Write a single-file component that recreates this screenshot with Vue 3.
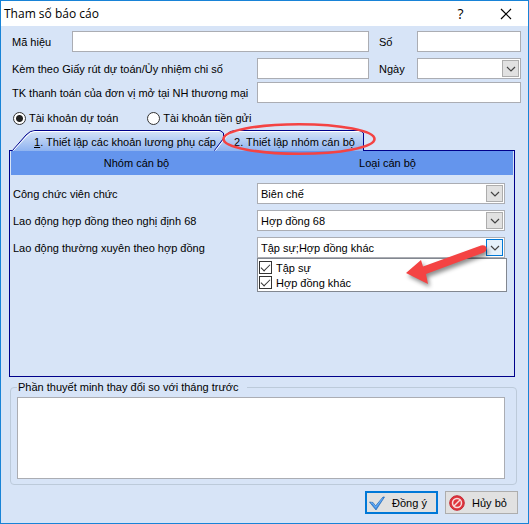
<script setup>
import { ref, reactive, computed } from 'vue'

const form = reactive({
  code: '',
  number: '',
  voucher: '',
  date: '',
  account: '',
  accountType: 'budget',
  note: ''
})

const tabs = [
  { id: 1, label: 'Thiết lập các khoản lương phụ cấp' },
  { id: 2, label: 'Thiết lập nhóm cán bộ' }
]
const activeTab = ref(2)

const groups = reactive([
  { id: 'g1', label: 'Công chức viên chức', value: 'Biên chế' },
  { id: 'g2', label: 'Lao động hợp đồng theo nghị định 68', value: 'Hợp đồng 68' }
])
const kinds = ['Biên chế', 'Hợp đồng 68', 'Tập sự', 'Hợp đồng khác']

const options = ['Tập sự', 'Hợp đồng khác']
const picked = ref(['Tập sự', 'Hợp đồng khác'])
const listOpen = ref(true)
const pickedText = computed(() => options.filter(o => picked.value.includes(o)).join(';'))

function toggleList () {
  listOpen.value = !listOpen.value
}
</script>

<template>
  <form class="window" @submit.prevent>
    <header class="titlebar">
      <h1 class="title">Tham số báo cáo</h1>
      <button class="win-btn" type="button" aria-label="Trợ giúp">?</button>
      <button class="win-btn" type="button" aria-label="Đóng">
        <svg width="12" height="12" viewBox="0 0 12 12"><path d="M1 1L11 11M11 1L1 11" fill="none" stroke="#000" stroke-width="1.2" /></svg>
      </button>
    </header>

    <!-- Thông tin chung -->
    <section class="fields">
      <div class="row">
        <label class="short" for="code">Mã hiệu</label>
        <input id="code" v-model="form.code" class="box grow" type="text" />
        <label class="side" for="number">Số</label>
        <input id="number" v-model="form.number" class="box fixed" type="text" />
      </div>
      <div class="row">
        <label class="long" for="voucher">Kèm theo Giấy rút dự toán/Ủy nhiệm chi số</label>
        <input id="voucher" v-model="form.voucher" class="box grow" type="text" />
        <label class="side" for="date">Ngày</label>
        <div class="combo fixed">
          <select id="date" v-model="form.date" class="box"><option value=""></option></select>
          <span class="arrow"><svg width="10" height="6" viewBox="0 0 10 6"><path d="M1 1L5 5L9 1" /></svg></span>
        </div>
      </div>
      <div class="row tight">
        <label class="long" for="account">TK thanh toán của đơn vị mở tại NH thương mại</label>
        <input id="account" v-model="form.account" class="box grow" type="text" />
      </div>
      <div class="radios">
        <label><input v-model="form.accountType" type="radio" name="type" value="budget" />Tài khoản dự toán</label>
        <label><input v-model="form.accountType" type="radio" name="type" value="deposit" />Tài khoản tiền gửi</label>
      </div>
    </section>

    <nav class="tabs">
      <!-- nền và đường viền vát của các tab -->
      <svg class="tab-shapes" width="354" height="21" viewBox="0 0 354 21">
        <defs>
          <linearGradient id="tabFill" x1="0" y1="0" x2="0" y2="1">
            <stop offset="0" stop-color="#d7e4f7" />
            <stop offset="1" stop-color="#8fb3f0" />
          </linearGradient>
        </defs>
        <path d="M1 21L15 5Q19 .5 24 .5H209L212.500 3V21Z" fill="url(#tabFill)" />
        <path d="M1.500 20.500L15 5Q19 .5 24 .5H209L212.500 3V10" fill="none" stroke="#00008b" />
        <path d="M2.500 20.500L16 6Q20 1.500 24 1.500H208" fill="none" stroke="#fff" />
        <path d="M203 21L215 5Q219 .5 224 .5H349L352.500 3V21Z" fill="url(#tabFill)" />
        <path d="M203.500 20.500L215 5Q219 .5 224 .5H349L352.500 3V21" fill="none" stroke="#00008b" />
        <path d="M204.500 20.500L216 6Q220 1.500 224 1.500H348" fill="none" stroke="#fff" />
      </svg>
      <button v-for="t in tabs" :key="t.id" :class="['tab', 'tab' + t.id]" type="button" @click="activeTab = t.id">
        <u>{{ t.id }}</u>. {{ t.label }}
      </button>
      <!-- khoanh đỏ tab nhóm cán bộ -->
      <svg class="ring" width="154" height="34" viewBox="0 0 154 34">
        <ellipse cx="77" cy="17" rx="75.500" ry="14.800" fill="none" stroke="#f44343" stroke-width="2.600" />
      </svg>
    </nav>

    <section class="panel">
      <div class="panel-head"><span>Nhóm cán bộ</span><span>Loại cán bộ</span></div>
      <div class="panel-body">
        <div v-for="g in groups" :key="g.id" class="group">
          <label :for="g.id">{{ g.label }}</label>
          <div class="combo">
            <select :id="g.id" v-model="g.value" class="box">
              <option v-for="k in kinds" :key="k">{{ k }}</option>
            </select>
            <span class="arrow"><svg width="10" height="6" viewBox="0 0 10 6"><path d="M1 1L5 5L9 1" /></svg></span>
          </div>
        </div>
        <div class="group">
          <label for="g3">Lao động thường xuyên theo hợp đồng</label>
          <div class="combo">
            <select id="g3" class="box" @mousedown.prevent="toggleList"><option>{{ pickedText }}</option></select>
            <span class="arrow active"><svg width="10" height="6" viewBox="0 0 10 6"><path d="M1 1L5 5L9 1" /></svg></span>
            <div v-if="listOpen" class="list">
              <label v-for="o in options" :key="o"><input v-model="picked" type="checkbox" :value="o" />{{ o }}</label>
            </div>
            <!-- mũi tên chỉ vào danh sách -->
            <svg class="pointer" width="84" height="48" viewBox="0 0 84 48">
              <path d="M0 32L15 19L17 25.500L75 4.500Q79 3.500 80.500 6.500Q81 10 78 11.500L20 33L22 43Z" fill="#f44343" />
            </svg>
          </div>
        </div>
      </div>
    </section>

    <fieldset class="note">
      <legend><label for="note">Phần thuyết minh thay đổi so với tháng trước</label></legend>
      <textarea id="note" v-model="form.note"></textarea>
    </fieldset>

    <footer class="actions">
      <button class="btn primary" type="submit">
        <svg width="16" height="16" viewBox="0 0 16 16">
          <path d="M.5 7L4 7.500L6.500 11L14 2L15.500 2L7 15Z" fill="#3d8ee6" stroke="#2468b5" stroke-width=".7" />
          <path d="M2 7.800L3.700 8.300L6.700 12.300L13.500 3.500" fill="none" stroke="#7dbbfa" stroke-width=".8" />
        </svg>
        <span>Đồng ý</span>
      </button>
      <button class="btn" type="button">
        <svg width="16" height="16" viewBox="0 0 16 16">
          <circle cx="8" cy="8" r="7.300" fill="#e0343c" stroke="#c42a34" />
          <circle cx="8" cy="8" r="4.500" fill="#e0343c" stroke="#f6dcdc" stroke-width="1.500" />
          <path d="M5 11L11 5" stroke="#f6dcdc" stroke-width="1.500" />
        </svg>
        <span>Hủy bỏ</span>
      </button>
    </footer>
  </form>
</template>

<style>
body { margin: 0; background: #d7e4f7; }
</style>

<style scoped>
* { box-sizing: border-box; }

.window {
  min-height: 100vh;
  display: flex;
  flex-direction: column;
  border: 1px solid #1883d7;
  background: #d7e4f7;
  color: #000;
  font: 11px/16px "Liberation Sans", Arial, sans-serif;
}
input, select, textarea, button { margin: 0; font: inherit; color: inherit; }

/* ===== Thanh tiêu đề ===== */
.titlebar { display: flex; align-items: center; height: 25px; padding-left: 3px; background: #fff; }
.title { flex: 1; margin: 0; font: 12px/16px "Open Sans", sans-serif; }
.win-btn {
  width: 45px; height: 25px; padding: 0;
  display: grid; place-items: center;
  border: 0; background: none;
  font: 14px/16px "Open Sans", sans-serif;
}

/* ===== Ô nhập ===== */
.fields { padding: 5px 7px 0 11px; }
.row { display: flex; align-items: center; margin-bottom: 6px; }
.row.tight { margin-top: -3px; }
.short { width: 60px; }
.long { width: 245px; white-space: nowrap; }
.side { width: 48px; padding-left: 10px; }
.box {
  height: 21px; min-width: 0; padding: 0 4px;
  border: 1px solid #abadb3; border-radius: 0;
  background: #fff; outline: 0;
}
.grow { flex: 1; }
.fixed { width: 104px; }

.combo { position: relative; }
.combo select { display: block; width: 100%; padding: 0 3px; appearance: none; }
.arrow {
  position: absolute; top: 2px; right: 2px;
  width: 17px; height: 17px;
  display: grid; place-items: center;
  border: 1px solid #adadad; background: #e1e1e1;
  pointer-events: none;
}
.arrow path { fill: none; stroke: #444; stroke-width: 1.2; }
.arrow.active { border-color: #0078d7; background: #e5f1fb; }

.radios { display: flex; gap: 28px; padding-top: 1px; }
.radios label { display: flex; align-items: center; gap: 3px; }
.radios input {
  width: 13px; height: 13px; margin-left: 1px; appearance: none;
  border: 1px solid #333; border-radius: 50%; background: #fff;
}
.radios input:checked { background: radial-gradient(circle, #222 3px, #fff 4px); }

/* ===== Tab ===== */
.tabs { position: relative; display: flex; height: 21px; margin: 4px 12px -1px 10px; }
.tab {
  position: relative;
  height: 21px; padding: 2px 0 0; border: 0; background: none;
  text-align: left; white-space: nowrap;
}
.tab1 { width: 207px; padding-left: 23px; }
.tab2 { width: 146px; padding-left: 16px; }
.tab-shapes { position: absolute; left: 0; top: 0; pointer-events: none; }
.ring { position: absolute; left: 211px; top: -8px; z-index: 1; pointer-events: none; }

.panel { height: 227px; margin: 0 13px 0 8px; border: 1px solid #00008b; }
.panel-head {
  display: grid; grid-template-columns: 1fr 1fr;
  height: 24px; margin: 0 1px; align-items: center;
  background: #6495ed; text-align: center;
}
.panel-body { display: grid; gap: 6px; padding: 8px 9px 0 3px; }
.group { display: grid; grid-template-columns: 244px 1fr; align-items: center; }

.list {
  position: absolute; left: 0; right: -2px; top: 21px;
  padding: 1px; border: 1px solid #828790; background: #fff;
}
.list label { display: flex; align-items: center; gap: 4px; height: 15px; }
.list input {
  width: 13px; height: 13px; appearance: none;
  border: 1px solid #333; background: #fff;
  display: grid; place-items: center;
}
.list input:checked::before {
  content: ''; width: 8px; height: 4px; margin-top: -3px;
  border: solid #333; border-width: 0 0 1px 1px; transform: rotate(-45deg);
}
.pointer { position: absolute; right: 15px; top: 4px; pointer-events: none; filter: drop-shadow(2px 3px 2px rgba(0, 0, 0, .45)); }

/* ===== Thuyết minh ===== */
.note {
  margin: 2px 11px 0 9px; padding: 2px 11px 5px 6px;
  border: 1px solid #bccada; border-radius: 4px;
}
.note legend { padding: 0 8px 0 1px; }
.note textarea {
  display: block; width: 100%; height: 82px; padding: 2px 4px;
  border: 1px solid #abadb3; background: #fff; resize: none; outline: 0;
}

.actions { display: flex; justify-content: flex-end; gap: 7px; padding: 6px 10px 8px; }
.btn {
  width: 73px; height: 23px; padding: 0 3px;
  display: flex; align-items: center;
  border: 1px solid #adadad; background: #e1e1e1;
}
.btn span { flex: 1; text-align: center; }
.btn.primary { border: 2px solid #0078d7; padding: 0 2px; }
</style>
